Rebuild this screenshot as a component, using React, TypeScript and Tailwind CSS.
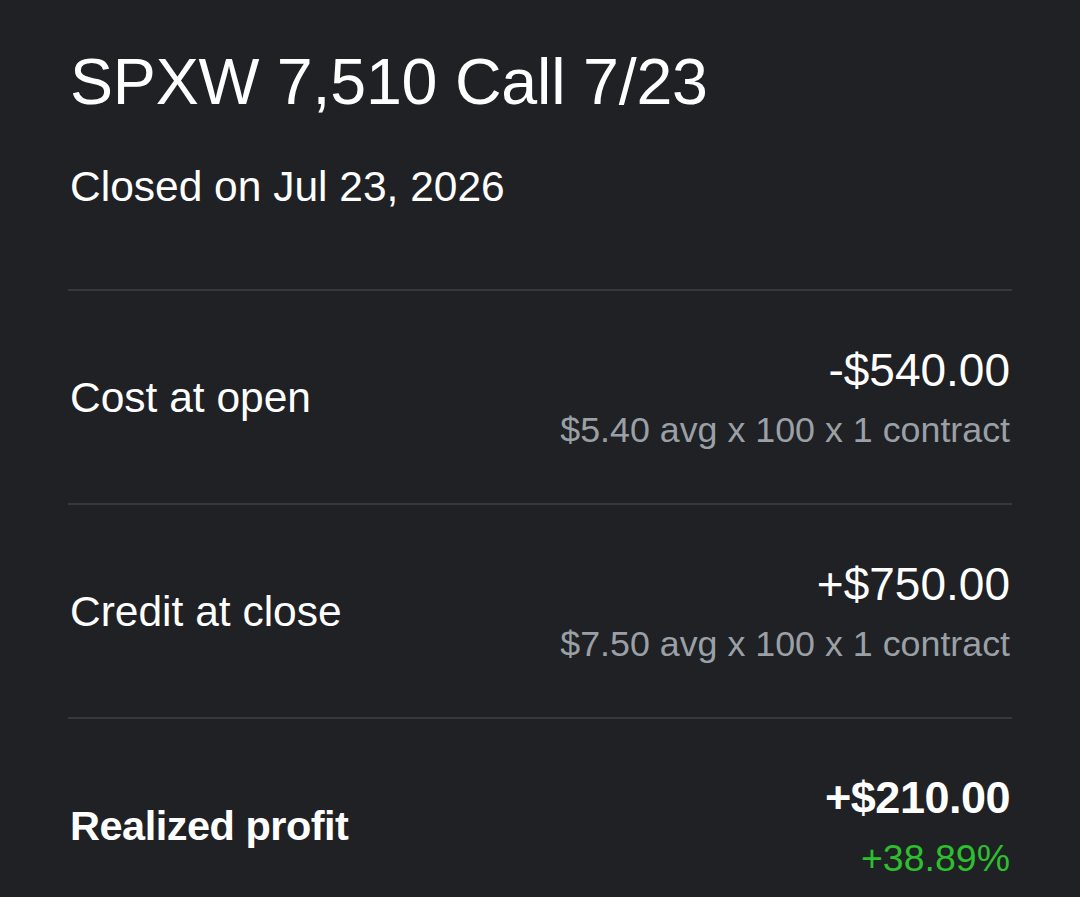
const font = { fontFamily: '"Liberation Sans", Arial, sans-serif' };

type Row = {
  label: string;
  value: string;
  detail: string;
  bold?: boolean;
  green?: boolean;
};

const ROWS: Row[] = [
  { label: "Cost at open", value: "-$540.00", detail: "$5.40 avg x 100 x 1 contract" },
  { label: "Credit at close", value: "+$750.00", detail: "$7.50 avg x 100 x 1 contract" },
  { label: "Realized profit", value: "+$210.00", detail: "+38.89%", bold: true, green: true },
];

export default function App() {
  return (
    <div className="min-h-[897px] w-[1080px] bg-[#1f2125] px-[68px] text-white" style={font}>
      {/* ---- Header ---- */}
      <div className="flex h-[289px] flex-col pt-[44px] pl-[2px]">
        <h1 className="text-[64.5px] leading-[76px] tracking-[-0.2px] text-white">SPXW 7,510 Call 7/23</h1>
        <p className="mt-[42px] text-[42.5px] leading-[50px] text-white">Closed on Jul 23, 2026</p>
      </div>

      {/* ---- Rows ---- */}
      {ROWS.map((row) => (
        <div
          key={row.label}
          className="flex h-[214px] items-center justify-between border-t-2 border-[#35383c] pt-[2px] pl-[2px] pr-[2px]"
        >
          <span className={row.bold ? "text-[41.5px] font-bold tracking-[-0.5px]" : "text-[42.5px]"}>
            {row.label}
          </span>
          <div className="flex flex-col items-end pt-[4px]">
            <span className={row.bold ? "text-[45px] font-bold leading-[56px] tracking-[-0.5px]" : "text-[46px] leading-[56px]"}>
              {row.value}
            </span>
            <span
              className={
                row.green
                  ? "mt-[4px] text-[37.5px] leading-[56px] text-[#2dbf2d]"
                  : "mt-[4px] text-[35.8px] leading-[56px] text-[#9aa0a6]"
              }
            >
              {row.detail}
            </span>
          </div>
        </div>
      ))}
    </div>
  );
}
